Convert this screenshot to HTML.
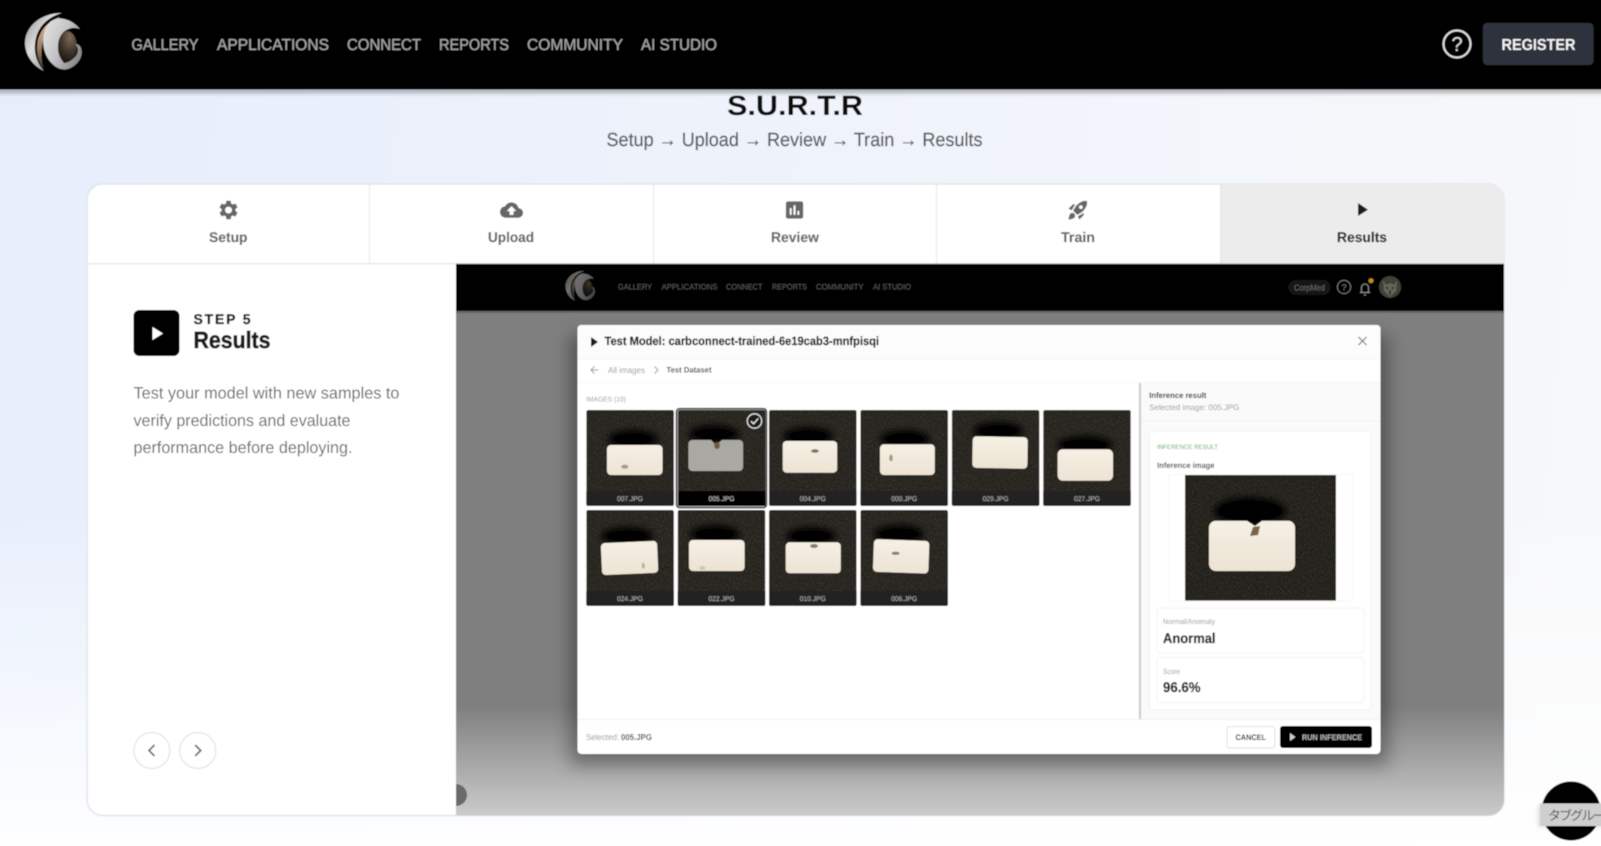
<!DOCTYPE html>
<html lang="en"><head><meta charset="utf-8"><title>S.U.R.T.R</title>
<style>
html,body{margin:0;padding:0;width:1601px;height:846px;overflow:hidden;background:#fff}
svg{display:block;position:absolute;left:0;top:0}
text{font-family:"Liberation Sans","Noto Sans CJK JP",sans-serif;text-rendering:geometricPrecision}
.b{font-weight:700}
</style></head><body>
<svg width="1601" height="846" viewBox="0 0 1601 846" xmlns="http://www.w3.org/2000/svg">
<defs>
<linearGradient id="bg" gradientUnits="userSpaceOnUse" x1="0" y1="120" x2="1601" y2="260"><stop offset="0" stop-color="#e6eefc"/><stop offset=".5" stop-color="#eff3fb"/><stop offset="1" stop-color="#f7f8fa"/></linearGradient>
<linearGradient id="bgw" gradientUnits="userSpaceOnUse" x1="0" y1="500" x2="0" y2="846"><stop offset="0" stop-color="#fff" stop-opacity="0"/><stop offset="1" stop-color="#fff" stop-opacity=".95"/></linearGradient>
<linearGradient id="fade" x1="0" y1="0" x2="0" y2="1"><stop offset="0" stop-color="#7f7f7f"/><stop offset=".8" stop-color="#7f7f7f"/><stop offset="1" stop-color="#cbcbcb"/></linearGradient>
<linearGradient id="silver" x1="0" y1="0" x2="1" y2="1"><stop offset="0" stop-color="#8b8b8d"/><stop offset=".4" stop-color="#dedede"/><stop offset="1" stop-color="#77787a"/></linearGradient>
<linearGradient id="silver2" x1="0" y1="0" x2="1" y2=".6"><stop offset="0" stop-color="#e6e6e6"/><stop offset=".55" stop-color="#c4c4c6"/><stop offset="1" stop-color="#8b8c8e"/></linearGradient>
<linearGradient id="tan" x1="0" y1="0" x2="0" y2="1"><stop offset="0" stop-color="#e5c7a8"/><stop offset=".6" stop-color="#9a7c60"/><stop offset="1" stop-color="#3a3028"/></linearGradient>
<radialGradient id="sphere" cx=".65" cy=".2" r=".85"><stop offset="0" stop-color="#7d6a54"/><stop offset=".6" stop-color="#3a3026"/><stop offset="1" stop-color="#17120e"/></radialGradient>
<linearGradient id="pill" x1="0" y1="0" x2="0" y2="1"><stop offset="0" stop-color="#f6efe4"/><stop offset="1" stop-color="#ece3d3"/></linearGradient>
<filter id="soft" x="-2%" y="-4%" width="104%" height="108%"><feGaussianBlur stdDeviation=".42"/></filter>
<filter id="b3" x="-50%" y="-80%" width="200%" height="260%"><feGaussianBlur stdDeviation="3.5"/></filter>
<filter id="b8" x="-10%" y="-10%" width="120%" height="120%"><feGaussianBlur stdDeviation="9"/></filter>
<filter id="b2" x="-10%" y="-100%" width="120%" height="300%"><feGaussianBlur stdDeviation="2"/></filter>
<filter id="noise" x="0" y="0" width="100%" height="100%" color-interpolation-filters="sRGB">
<feTurbulence type="fractalNoise" baseFrequency="0.7" numOctaves="2" seed="4" result="t"/>
<feColorMatrix in="t" type="matrix" values="0 0 0 0 .36  0 0 0 0 .33  0 0 0 0 .27  .9 .9 0 0 -.78" result="n"/>
<feMerge result="m"><feMergeNode in="SourceGraphic"/><feMergeNode in="n"/></feMerge>
<feComposite in="m" in2="SourceAlpha" operator="in"/>
</filter>
<clipPath id="card"><rect x="87" y="184" width="1417" height="631.5" rx="16"/></clipPath>
<g id="logo">
<path d="M62 13C40 13 25 27 25 43C25 55 33 66 44 71C36 62 33 50 36 38C39 26 48 17 62 13Z" fill="url(#silver)"/>
<path d="M60 17C47 22 40 30 37.5 42C36 52 38 62 44 70C40 58 41 42 46 34C50 27 56 21 60 17Z" fill="url(#tan)"/>
<ellipse cx="67" cy="47" rx="10" ry="16" fill="url(#sphere)"/>
<path d="M80 29C72 19 58 15 50 22C42 30 41 46 47 57C52 66 60 71 68 69C77 66 84 57 81 48C80 45 77 44 75 44C79 47 79 54 74 58C71 61 67 63 64 63C60 58 58 54 58 47C58 38 62 31 69 29C73 27 77 28 80 29Z" fill="url(#silver2)"/>
</g>
</defs>
<g filter="url(#soft)">
<rect x="-30" y="-30" width="1661" height="906" fill="url(#bg)"/>
<rect x="-30" y="500" width="1661" height="376" fill="url(#bgw)"/>

<!-- page heading -->
<text class="b" x="727" y="115" font-size="28" fill="#0c0c0c" textLength="136" lengthAdjust="spacingAndGlyphs">S.U.R.T.R</text>
<text x="606.5" y="146" font-size="19" fill="#5c5e61" stroke="#5c5e61" stroke-width=".25" textLength="376" lengthAdjust="spacingAndGlyphs">Setup → Upload → Review → Train → Results</text>

<!-- top header -->
<rect x="-20" y="88" width="1641" height="5" fill="#000" opacity=".3" filter="url(#b2)"/>
<rect x="-20" y="-20" width="1641" height="109.5" fill="#000"/>
<use href="#logo"/>
<g font-size="16" fill="#a4a4a4" stroke="#a4a4a4" stroke-width=".2">
<text x="131.5" y="50" textLength="67" lengthAdjust="spacingAndGlyphs">GALLERY</text>
<text x="217" y="50" textLength="112" lengthAdjust="spacingAndGlyphs">APPLICATIONS</text>
<text x="347" y="50" textLength="74" lengthAdjust="spacingAndGlyphs">CONNECT</text>
<text x="439" y="50" textLength="70" lengthAdjust="spacingAndGlyphs">REPORTS</text>
<text x="527" y="50" textLength="96" lengthAdjust="spacingAndGlyphs">COMMUNITY</text>
<text x="641" y="50" textLength="76" lengthAdjust="spacingAndGlyphs">AI STUDIO</text>
</g>
<circle cx="1457" cy="44" r="13.5" fill="none" stroke="#dedede" stroke-width="2"/>
<text x="1457" y="51" font-size="20" fill="#dedede" text-anchor="middle">?</text>
<rect x="1483" y="23" width="110.5" height="42" rx="4" fill="#2f323d"/>
<text x="1501.5" y="50" font-size="16" font-weight="700" fill="#f2f2f2" textLength="74" lengthAdjust="spacingAndGlyphs">REGISTER</text>

<!-- card -->
<rect x="87" y="184" width="1417" height="631.5" rx="16" fill="#fff" stroke="#e2e5ea" stroke-width="1.5"/>
<g clip-path="url(#card)">
<rect x="1220.5" y="184" width="284" height="79" fill="#ececec"/>
<rect x="87" y="263" width="369" height="1.5" fill="#e8e8e8"/>
<rect x="369" y="184" width="1" height="79" fill="#e8e8e8"/>
<rect x="653" y="184" width="1" height="79" fill="#e8e8e8"/>
<rect x="936" y="184" width="1" height="79" fill="#e8e8e8"/>
<rect x="1220" y="184" width="1" height="79" fill="#e2e2e2"/>
<rect x="456" y="263" width="1050" height="1" fill="#cfcfcf"/>

<!-- tab icons -->
<path transform="translate(217,198.5) scale(.96)" fill="#666" d="M19.14 12.94c.04-.3.06-.61.06-.94 0-.32-.02-.64-.07-.94l2.03-1.58c.18-.14.23-.41.12-.61l-1.92-3.32c-.12-.22-.37-.29-.59-.22l-2.39.96c-.5-.38-1.03-.7-1.62-.94l-.36-2.54c-.04-.24-.24-.41-.48-.41h-3.84c-.24 0-.43.17-.47.41l-.36 2.54c-.59.24-1.13.57-1.62.94l-2.39-.96c-.22-.08-.47 0-.59.22L2.74 8.87c-.12.21-.08.47.12.61l2.03 1.58c-.05.3-.09.63-.09.94s.02.64.07.94l-2.03 1.58c-.18.14-.23.41-.12.61l1.92 3.32c.12.22.37.29.59.22l2.39-.96c.5.38 1.03.7 1.62.94l.36 2.54c.05.24.24.41.48.41h3.84c.24 0 .44-.17.47-.41l.36-2.54c.59-.24 1.13-.56 1.62-.94l2.39.96c.22.08.47 0 .59-.22l1.92-3.32c.12-.22.07-.47-.12-.61l-2.01-1.58zM12 15.6c-1.98 0-3.6-1.62-3.6-3.6s1.62-3.6 3.6-3.6 3.6 1.62 3.6 3.6-1.62 3.6-3.6 3.6z"/>
<path transform="translate(500,198.5) scale(.96)" fill="#666" d="M19.35 10.04C18.67 6.59 15.64 4 12 4 9.11 4 6.6 5.64 5.35 8.04 2.34 8.36 0 10.91 0 14c0 3.31 2.69 6 6 6h13c2.76 0 5-2.24 5-5 0-2.64-2.05-4.78-4.65-4.96zM14 13v4h-4v-4H7l5-5 5 5h-3z"/>
<path transform="translate(783,198.5) scale(.96)" fill="#666" d="M19 3H5c-1.1 0-2 .9-2 2v14c0 1.1.9 2 2 2h14c1.1 0 2-.9 2-2V5c0-1.1-.9-2-2-2zM9 17H7v-7h2v7zm4 0h-2V7h2v10zm4 0h-2v-4h2v4z"/>
<path transform="translate(1066.5,198.5) scale(.96)" fill="#666" d="M9.19 6.35c-2.04 2.29-3.44 5.58-3.57 5.89L2 10.69l4.05-4.05c.47-.47 1.15-.68 1.81-.55l1.33.26zM11.17 17s3.74-1.55 5.89-3.7c5.4-5.4 4.5-9.62 4.21-10.57-.95-.3-5.17-1.19-10.57 4.21C8.55 9.09 7 12.83 7 12.83L11.17 17zm6.48-2.19c-2.29 2.04-5.58 3.44-5.89 3.57L13.31 22l4.05-4.05c.47-.47.68-1.15.55-1.81l-.26-1.33zM9 18c0 .83-.34 1.58-.88 2.12C6.94 21.3 2 22 2 22s.7-4.94 1.88-6.12C4.42 15.34 5.17 15 6 15c1.66 0 3 1.34 3 3zm4-9c0-1.1.9-2 2-2s2 .9 2 2-.9 2-2 2-2-.9-2-2z"/>
<path d="M1358 203L1368 209.7L1358 216Z" fill="#1c1c1c"/>
<g font-size="14" class="b" font-weight="700" fill="#666" stroke="#666" stroke-width=".15">
<text x="209" y="242" textLength="38.5" lengthAdjust="spacingAndGlyphs">Setup</text>
<text x="488" y="242" textLength="46" lengthAdjust="spacingAndGlyphs">Upload</text>
<text x="771" y="242" textLength="48" lengthAdjust="spacingAndGlyphs">Review</text>
<text x="1061" y="242" textLength="34" lengthAdjust="spacingAndGlyphs">Train</text>
<text x="1337" y="242" fill="#262626" stroke="#262626" textLength="50" lengthAdjust="spacingAndGlyphs">Results</text>
</g>

<!-- left panel -->
<rect x="133.5" y="310" width="46" height="46" rx="6" fill="#000"/>
<path d="M152.5 327L163 333.5L152.5 340Z" fill="#fff"/>
<text font-weight="700" x="193.5" y="324" font-size="14" fill="#141414" stroke="#141414" stroke-width=".3" textLength="57" lengthAdjust="spacing">STEP 5</text>
<text font-weight="700" x="193.5" y="348" font-size="23.5" fill="#1a1a1a" stroke="#1a1a1a" stroke-width=".6" textLength="77" lengthAdjust="spacingAndGlyphs">Results</text>
<g font-size="16.5" fill="#6a6a6a">
<text x="133.5" y="398.5" textLength="266" lengthAdjust="spacingAndGlyphs">Test your model with new samples to</text>
<text x="133.5" y="426" textLength="217" lengthAdjust="spacingAndGlyphs">verify predictions and evaluate</text>
<text x="133.5" y="453" textLength="219" lengthAdjust="spacingAndGlyphs">performance before deploying.</text>
</g>
<circle cx="151.8" cy="750.5" r="18" fill="#fff" stroke="#e3e3e3" stroke-width="1.2"/>
<circle cx="197.8" cy="750.5" r="18" fill="#fff" stroke="#e3e3e3" stroke-width="1.2"/>
<path d="M154.5 745L149 750.5L154.5 756" fill="none" stroke="#666" stroke-width="1.7"/>
<path d="M195.2 745L200.7 750.5L195.2 756" fill="none" stroke="#666" stroke-width="1.7"/>

<!-- preview -->
<rect x="456" y="264" width="1050" height="552" fill="url(#fade)"/>
<rect x="456" y="264" width="1050" height="47" fill="#000"/>
<rect x="456" y="310" width="1050" height="3" fill="#000" opacity=".2"/>
<path d="M456 784a11 11 0 0 1 0 22Z" fill="#6a6a6a"/>
<use href="#logo" transform="translate(552.5,264) scale(.52)" opacity=".5"/>
<g font-size="8" fill="#575757">
<text x="618" y="289.5" textLength="34" lengthAdjust="spacingAndGlyphs">GALLERY</text>
<text x="661.5" y="289.5" textLength="56" lengthAdjust="spacingAndGlyphs">APPLICATIONS</text>
<text x="726" y="289.5" textLength="36.5" lengthAdjust="spacingAndGlyphs">CONNECT</text>
<text x="772" y="289.5" textLength="35" lengthAdjust="spacingAndGlyphs">REPORTS</text>
<text x="816" y="289.5" textLength="47.5" lengthAdjust="spacingAndGlyphs">COMMUNITY</text>
<text x="873" y="289.5" textLength="38" lengthAdjust="spacingAndGlyphs">AI STUDIO</text>
</g>
<rect x="1288.5" y="280" width="42" height="15" rx="7.5" fill="#191919"/>
<text x="1294" y="290.5" font-size="8.5" fill="#6a6a6a" textLength="31" lengthAdjust="spacingAndGlyphs">CorpMed</text>
<circle cx="1344" cy="287" r="6.6" fill="none" stroke="#777" stroke-width="1"/>
<text x="1344" y="290.5" font-size="9" fill="#777" text-anchor="middle">?</text>
<path d="M1360 292.5h10M1361.5 292.5v-5a3.5 3.5 0 0 1 7 0v5M1364 295h2" fill="none" stroke="#888" stroke-width="1.1"/>
<circle cx="1371" cy="280.7" r="2.5" fill="#c08a1f"/>
<circle cx="1390" cy="287" r="11" fill="#3f3f37"/>
<path d="M1383 280L1386 285L1390 283L1394 285L1397 280L1396 291L1390 297L1384 291Z" fill="#66655a"/>
<path d="M1386 288h2.5M1391.5 288h2.5M1390 290v5" stroke="#222" stroke-width="1.4"/>

<!-- modal -->
<rect x="570" y="335" width="818" height="430" fill="#000" opacity=".35" filter="url(#b8)"/>
<rect x="577.5" y="325" width="803" height="429" rx="4" fill="#fff"/>
<path d="M577.5 358V329a4 4 0 0 1 4-4H1376.5a4 4 0 0 1 4 4V358Z" fill="#fcfcfc"/>
<rect x="577.5" y="358" width="803" height="1" fill="#f3f3f3"/>
<rect x="577.5" y="382" width="803" height="1" fill="#f5f5f5"/>
<path d="M591 337L598 342L591 347Z" fill="#1e1e1e"/>
<text font-weight="700" x="604.5" y="345" font-size="12" fill="#222" stroke="#222" stroke-width=".2" textLength="274.5" lengthAdjust="spacingAndGlyphs">Test Model: carbconnect-trained-6e19cab3-mnfpisqi</text>
<path d="M1358.5 337L1366.5 345M1366.5 337L1358.5 345" stroke="#777" stroke-width="1.2" fill="none"/>
<path d="M598.5 370h-7.5M594.5 366.5L591 370L594.5 373.5" fill="none" stroke="#999" stroke-width="1"/>
<text x="608" y="373" font-size="8.5" fill="#999" textLength="37" lengthAdjust="spacingAndGlyphs">All images</text>
<path d="M654.5 366.5L658 370L654.5 373.5" fill="none" stroke="#999" stroke-width="1"/>
<text font-weight="700" x="666.5" y="372.5" font-size="8" fill="#555" textLength="45" lengthAdjust="spacingAndGlyphs">Test Dataset</text>
<text x="586" y="401.5" font-size="7" fill="#999" textLength="40" lengthAdjust="spacingAndGlyphs">IMAGES (10)</text>

<!-- selection ring -->
<rect x="676" y="408.2" width="91" height="100" rx="3" fill="#bbb"/>
<!-- thumbs -->
<g fill="#23211d" filter="url(#noise)">
<rect x="586.3" y="410" width="87.6" height="96" rx="2"/>
<rect x="678" y="410" width="87.6" height="96" rx="2"/>
<rect x="769" y="410" width="87.6" height="96" rx="2"/>
<rect x="860.4" y="410" width="87.6" height="96" rx="2"/>
<rect x="951.8" y="410" width="87.6" height="96" rx="2"/>
<rect x="1043.2" y="410" width="87.6" height="96" rx="2"/>
<rect x="586.3" y="510" width="87.6" height="96" rx="2"/>
<rect x="677.7" y="510" width="87.6" height="96" rx="2"/>
<rect x="769" y="510" width="87.6" height="96" rx="2"/>
<rect x="860.4" y="510" width="87.6" height="96" rx="2"/>
</g>
<rect x="676.5" y="408.7" width="90" height="99" rx="3" fill="none" stroke="#4a4a4a" stroke-width="1.6"/>
<g fill="#000" filter="url(#b3)">
<ellipse cx="633" cy="439" rx="25" ry="9"/><ellipse cx="714" cy="434" rx="25" ry="9"/><ellipse cx="808" cy="436" rx="25" ry="9"/><ellipse cx="905" cy="439" rx="25" ry="9"/><ellipse cx="998" cy="431" rx="25" ry="9"/><ellipse cx="1085" cy="445" rx="28" ry="9"/>
<ellipse cx="627" cy="536" rx="26" ry="9"/><ellipse cx="715" cy="534" rx="25" ry="9"/><ellipse cx="811" cy="536" rx="25" ry="9"/><ellipse cx="899" cy="534" rx="25" ry="9"/>
</g>
<rect x="678" y="491" width="87.6" height="15" fill="#000"/>
<g fill="#242424">
<path d="M586.3 491h87.6v13a2 2 0 0 1-2 2h-83.6a2 2 0 0 1-2-2Z"/>
<path d="M769 491h87.6v13a2 2 0 0 1-2 2H771a2 2 0 0 1-2-2Z"/>
<path d="M860.4 491H948v13a2 2 0 0 1-2 2H862.4a2 2 0 0 1-2-2Z"/>
<path d="M951.8 491h87.6v13a2 2 0 0 1-2 2H953.8a2 2 0 0 1-2-2Z"/>
<path d="M1043.2 491h87.6v13a2 2 0 0 1-2 2h-83.6a2 2 0 0 1-2-2Z"/>
<path d="M586.3 591h87.6v13a2 2 0 0 1-2 2h-83.6a2 2 0 0 1-2-2Z"/>
<path d="M677.7 591h87.6v13a2 2 0 0 1-2 2h-83.6a2 2 0 0 1-2-2Z"/>
<path d="M769 591h87.6v13a2 2 0 0 1-2 2H771a2 2 0 0 1-2-2Z"/>
<path d="M860.4 591H948v13a2 2 0 0 1-2 2H862.4a2 2 0 0 1-2-2Z"/>
</g>
<g fill="url(#pill)">
<rect x="607" y="445" width="55.5" height="30" rx="4"/>
<rect x="782.7" y="441" width="54.5" height="31.7" rx="4"/>
<rect x="880" y="444.3" width="54.8" height="30.7" rx="4"/>
<rect x="972.5" y="436.7" width="55.1" height="31.6" rx="4" transform="rotate(1 1000 452)"/>
<rect x="1057.6" y="449.3" width="55.4" height="31.4" rx="5"/>
<rect x="601.4" y="542" width="56.3" height="32" rx="4" transform="rotate(-2.5 629 558)"/>
<rect x="689" y="540" width="55.6" height="31" rx="4"/>
<rect x="785.7" y="542.3" width="55.1" height="31" rx="4"/>
<rect x="873.4" y="540" width="55.5" height="32.7" rx="4" transform="rotate(2 901 556)"/>
</g>
<path d="M692.4 440H711L716 445L722 440H739.1a4 4 0 0 1 4 4V467a4 4 0 0 1-4 4H692.4a4 4 0 0 1-4-4V444a4 4 0 0 1 4-4Z" fill="#aaa8a2"/>
<g fill="#a89a82">
<ellipse cx="624.8" cy="466.7" rx="3.5" ry="2"/>
<ellipse cx="815" cy="451" rx="3.8" ry="1.8" fill="#80705a"/>
<ellipse cx="891" cy="458" rx="1.8" ry="3.5"/>
<ellipse cx="643.3" cy="565.7" rx="1.5" ry="3" fill="#bdb09a"/>
<ellipse cx="702.4" cy="568" rx="3" ry="2" fill="#d2c6b0"/>
<ellipse cx="814" cy="546" rx="4" ry="2" fill="#8a7a60"/>
<ellipse cx="895.6" cy="553.3" rx="4" ry="1.6" fill="#8a7a60"/>
</g>
<ellipse cx="717" cy="445.5" rx="2.8" ry="3.5" fill="#6b5a3e"/>
<g font-size="7" fill="#b8b8b8" text-anchor="middle">
<text x="630" y="501" textLength="26" lengthAdjust="spacingAndGlyphs">007.JPG</text>
<text x="721.5" y="501" textLength="26" lengthAdjust="spacingAndGlyphs" fill="#ccc">005.JPG</text>
<text x="812.8" y="501" textLength="26" lengthAdjust="spacingAndGlyphs">004.JPG</text>
<text x="904.2" y="501" textLength="26" lengthAdjust="spacingAndGlyphs">000.JPG</text>
<text x="995.6" y="501" textLength="26" lengthAdjust="spacingAndGlyphs">029.JPG</text>
<text x="1087" y="501" textLength="26" lengthAdjust="spacingAndGlyphs">027.JPG</text>
<text x="630" y="601" textLength="26" lengthAdjust="spacingAndGlyphs">024.JPG</text>
<text x="721.5" y="601" textLength="26" lengthAdjust="spacingAndGlyphs">022.JPG</text>
<text x="812.8" y="601" textLength="26" lengthAdjust="spacingAndGlyphs">010.JPG</text>
<text x="904.2" y="601" textLength="26" lengthAdjust="spacingAndGlyphs">006.JPG</text>
</g>
<circle cx="754.5" cy="421" r="7.2" fill="#1a1a1a" stroke="#ddd" stroke-width="1.3"/>
<path d="M751 421.2L753.6 423.8L758.2 418.5" fill="none" stroke="#eee" stroke-width="1.3"/>

<!-- result pane -->
<rect x="1141" y="383" width="239.5" height="336" fill="#fafafa"/>
<rect x="1139" y="383" width="2" height="336" fill="#c9c9c9"/>
<rect x="1141" y="420.5" width="239.5" height="1" fill="#f0f0f0"/>
<text font-weight="700" x="1149.3" y="398" font-size="8" fill="#333" textLength="57" lengthAdjust="spacingAndGlyphs">Inference result</text>
<text x="1149.3" y="410" font-size="8" fill="#999" textLength="90" lengthAdjust="spacingAndGlyphs">Selected image: 005.JPG</text>
<rect x="1149.5" y="431" width="221.5" height="279" rx="3" fill="#fff" stroke="#f3f3f3"/>
<text x="1157" y="449" font-size="6.5" fill="#55a865" textLength="61" lengthAdjust="spacingAndGlyphs">INFERENCE RESULT</text>
<text font-weight="700" x="1157" y="468" font-size="8" fill="#555" textLength="57.5" lengthAdjust="spacingAndGlyphs">Inference image</text>
<rect x="1168.5" y="474.5" width="184" height="126.5" rx="2" fill="#fff" stroke="#f6f6f6"/>
<rect x="1185" y="475" width="151" height="125.7" fill="#1f1d19" filter="url(#noise)"/>
<ellipse cx="1250" cy="511" rx="36" ry="14" fill="#000" filter="url(#b3)"/>
<path d="M1216 520.7H1247L1255 526L1262 520.7H1288a7 7 0 0 1 7 7V564a7 7 0 0 1-7 7H1216a7 7 0 0 1-7-7V527.7a7 7 0 0 1 7-7Z" fill="url(#pill)"/>
<path d="M1250 536L1253 527L1260 526L1258 535Z" fill="#7a6448"/>
<rect x="1157" y="608" width="207" height="45" rx="3" fill="#fff" stroke="#f3f3f3"/>
<text x="1163" y="624" font-size="7.5" fill="#999" textLength="52" lengthAdjust="spacingAndGlyphs">Normal/Anomaly</text>
<text font-weight="700" x="1163" y="643" font-size="14" fill="#242424" stroke="#242424" stroke-width=".25" textLength="52.5" lengthAdjust="spacingAndGlyphs">Anormal</text>
<rect x="1157" y="657.5" width="207" height="45" rx="3" fill="#fff" stroke="#f3f3f3"/>
<text x="1163" y="674" font-size="7.5" fill="#999" textLength="17" lengthAdjust="spacingAndGlyphs">Score</text>
<text font-weight="700" x="1163" y="692" font-size="14" fill="#242424" stroke="#242424" stroke-width=".25" textLength="37.5" lengthAdjust="spacingAndGlyphs">96.6%</text>

<!-- modal footer -->
<rect x="577.5" y="719" width="803" height="1" fill="#f0f0f0"/>
<text x="586" y="740" font-size="8.5" fill="#999" textLength="33" lengthAdjust="spacingAndGlyphs">Selected:</text>
<text font-weight="700" x="621" y="740" font-size="8.5" fill="#555" textLength="31" lengthAdjust="spacingAndGlyphs">005.JPG</text>
<rect x="1227" y="726.5" width="48" height="21.5" rx="3" fill="#fff" stroke="#e2e2e2"/>
<text font-weight="700" x="1235.5" y="740" font-size="8" fill="#333" textLength="30.5" lengthAdjust="spacingAndGlyphs">CANCEL</text>
<rect x="1280" y="726" width="92" height="22" rx="3" fill="#000"/>
<path d="M1290 733L1295.5 737L1290 741Z" fill="#ccc"/>
<text font-weight="700" x="1302" y="740" font-size="8" fill="#b4b4b4" textLength="60" lengthAdjust="spacingAndGlyphs">RUN INFERENCE</text>
</g>

<!-- floating tab-group button -->
<circle cx="1571" cy="811" r="29.5" fill="#000"/>
<rect x="1538" y="805" width="70" height="22" fill="#000" opacity=".12" filter="url(#b2)"/>
<rect x="1540" y="803.5" width="81" height="22.5" fill="#cfcfcf"/>
<text x="1548" y="820" font-size="13" fill="#555" textLength="68" lengthAdjust="spacing">タブグループ</text>
</g>
</svg>
</body></html>
